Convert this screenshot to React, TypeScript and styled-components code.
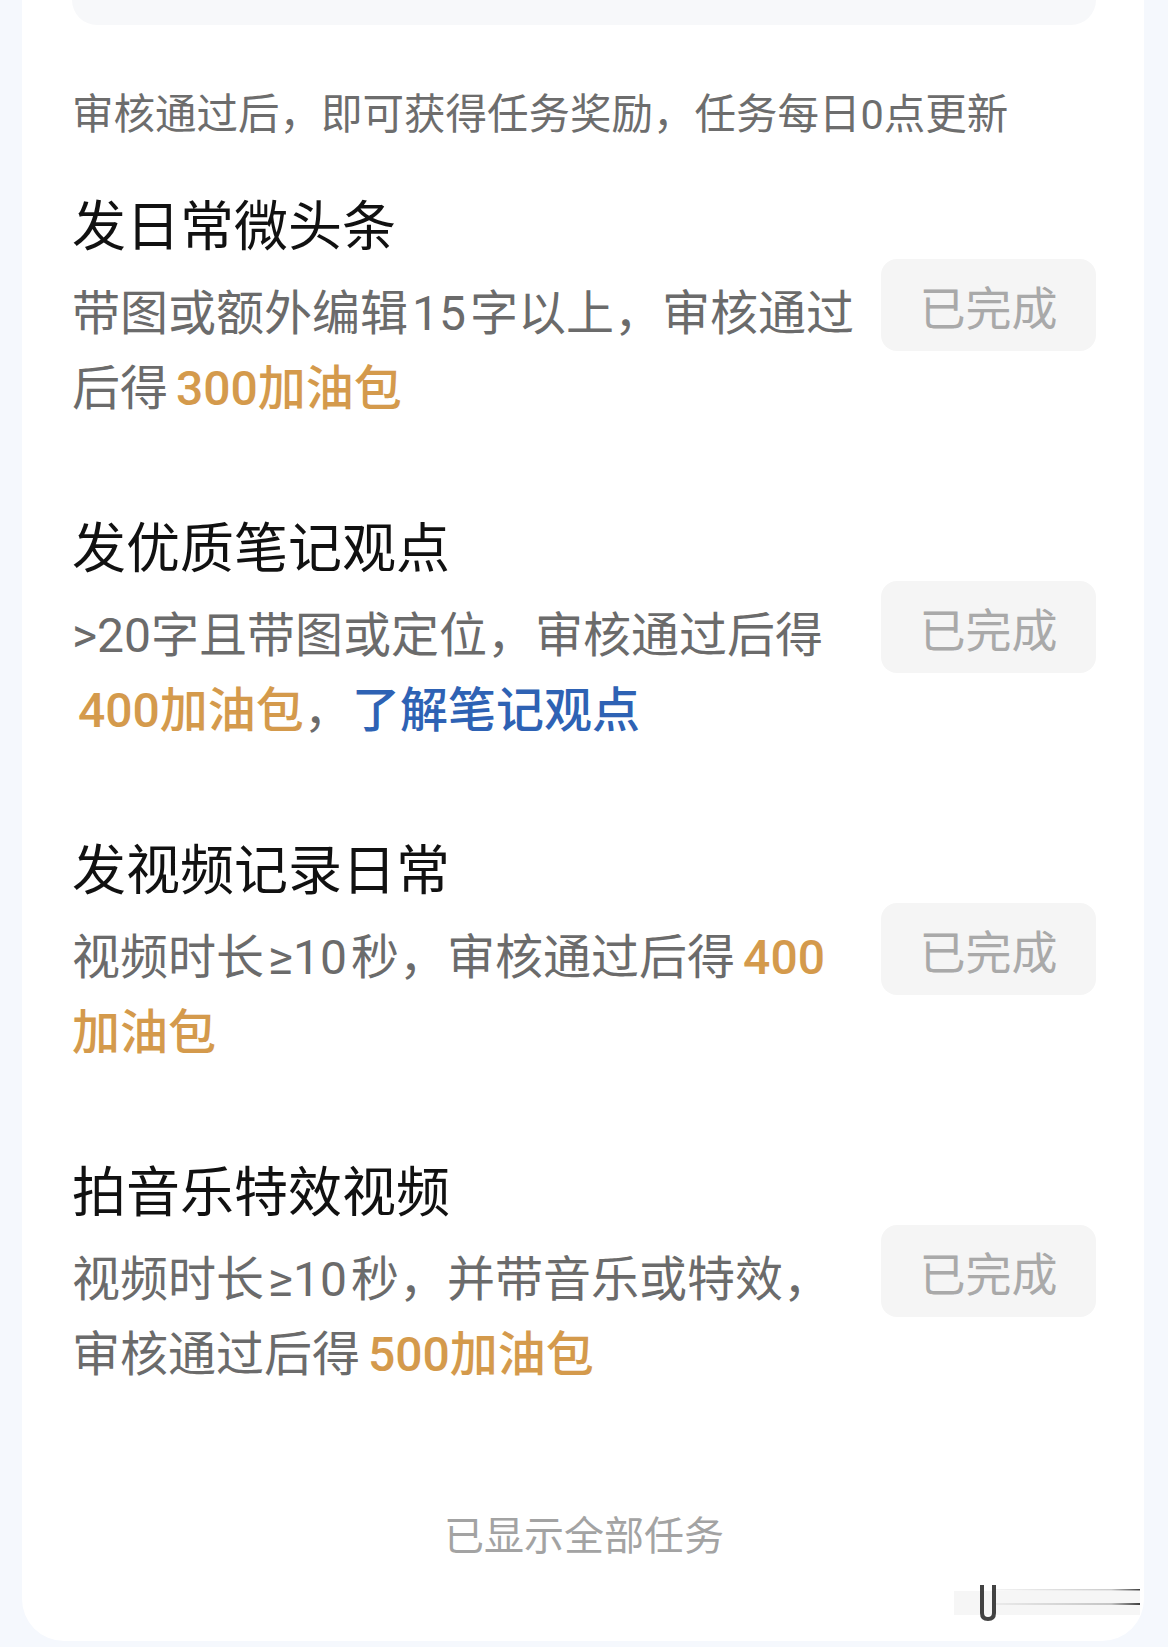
import React from "react";
import styled, { createGlobalStyle } from "styled-components";

const GlobalStyle = createGlobalStyle`
    html, body {
        margin: 0;
        padding: 0;
        background: #f5f8fd;
    }
    body {
        font-family: Roboto, "Noto Sans CJK SC", "Noto Sans", sans-serif;
    }
`;

const Page = styled.div`
    width: 1168px;
    height: 1647px;
    padding: 0 24px 6px 22px;
    box-sizing: border-box;
    background: #f5f8fd;
    overflow: hidden;
`;

const Card = styled.div`
    position: relative;
    background: #ffffff;
    height: 100%;
    box-sizing: border-box;
    padding: 0 48px 0 50px;
    border-radius: 0 0 42px 42px;
    display: flex;
    flex-direction: column;
`;

const TopPanel = styled.div`
    height: 25px;
    background: #f7f8fa;
    border-radius: 0 0 26px 26px;
`;

const Intro = styled.div`
    margin-top: 60px;
    font-size: 41.5px;
    line-height: 60px;
    color: #6d6d6d;
    white-space: nowrap;
`;

const TaskList = styled.div`
    margin-top: 45px;
    display: flex;
    flex-direction: column;
    gap: 86px;
`;

const TaskRow = styled.div`
    display: flex;
    align-items: center;
    justify-content: space-between;
`;

const TaskText = styled.div`
    width: 790px;
`;

const TaskTitle = styled.div`
    font-size: 54px;
    line-height: 76px;
    color: #111111;
    margin-bottom: 10px;
`;

const TaskDesc = styled.div`
    font-size: 48px;
    line-height: 75px;
    color: #6b6b6b;
`;

const Reward = styled.span<{ $indent?: boolean }>`
    color: #d49a4c;
    font-weight: 500;
    margin-left: ${(p) => (p.$indent ? "6px" : "0")};
`;

const Link = styled.span`
    color: #2e62b4;
    font-weight: 500;
`;

const Num = styled.span`
    margin: 0 4px;
`;

const DoneButton = styled.div`
    width: 215px;
    height: 92px;
    margin-top: -7px;
    border-radius: 16px;
    background: #f5f5f5;
    color: #a9a9a9;
    font-size: 46px;
    display: flex;
    align-items: center;
    justify-content: center;
    flex-shrink: 0;
`;

const Footer = styled.div`
    margin-top: 117px;
    text-align: center;
    font-size: 40px;
    line-height: 56px;
    color: #a3a3a3;
`;

const Watermark = styled.svg`
    position: absolute;
    right: 0;
    bottom: 14px;
`;

type Task = {
    title: string;
    desc: React.ReactNode;
};

const tasks: Task[] = [
    {
        title: "发日常微头条",
        desc: (
            <>
                带图或额外编辑<Num>15</Num>字以上，审核通过
                <br />
                后得<Num /><Reward>300加油包</Reward>
            </>
        ),
    },
    {
        title: "发优质笔记观点",
        desc: (
            <>
                &gt;20字且带图或定位，审核通过后得
                <br />
                <Reward $indent>400加油包</Reward>，<Link>了解笔记观点</Link>
            </>
        ),
    },
    {
        title: "发视频记录日常",
        desc: (
            <>
                视频时长<Num>≥10</Num>秒，审核通过后得<Num />
                <Reward>400</Reward>
                <br />
                <Reward>加油包</Reward>
            </>
        ),
    },
    {
        title: "拍音乐特效视频",
        desc: (
            <>
                视频时长<Num>≥10</Num>秒，并带音乐或特效，
                <br />
                审核通过后得<Num /><Reward>500加油包</Reward>
            </>
        ),
    },
];

export default function App() {
    return (
        <Page>
            <GlobalStyle />
            <Card>
                <TopPanel />
                <Intro>审核通过后，即可获得任务奖励，任务每日0点更新</Intro>
                <TaskList>
                    {tasks.map((t) => (
                        <TaskRow key={t.title}>
                            <TaskText>
                                <TaskTitle>{t.title}</TaskTitle>
                                <TaskDesc>{t.desc}</TaskDesc>
                            </TaskText>
                            <DoneButton>已完成</DoneButton>
                        </TaskRow>
                    ))}
                </TaskList>
                <Footer>已显示全部任务</Footer>
                <Watermark width="190" height="50" viewBox="0 0 190 50">
                    <defs>
                        <linearGradient id="wmLine" x1="0" x2="1" y1="0" y2="0">
                            <stop offset="0" stopColor="#000" stopOpacity="0.05" />
                            <stop offset="0.8" stopColor="#000" stopOpacity="0.2" />
                            <stop offset="1" stopColor="#000" stopOpacity="0.75" />
                        </linearGradient>
                    </defs>
                    <rect x="0" y="14" width="186" height="24" fill="#000" opacity="0.035" />
                    <path
                        d="M28 8 V36 Q28 42 34 42 Q40 42 40 36 V8"
                        fill="none"
                        stroke="#222"
                        strokeWidth="4"
                        opacity="0.85"
                    />
                    <rect x="42" y="12" width="144" height="1.5" fill="url(#wmLine)" />
                    <rect x="42" y="26" width="144" height="2" fill="url(#wmLine)" />
                </Watermark>
            </Card>
        </Page>
    );
}
